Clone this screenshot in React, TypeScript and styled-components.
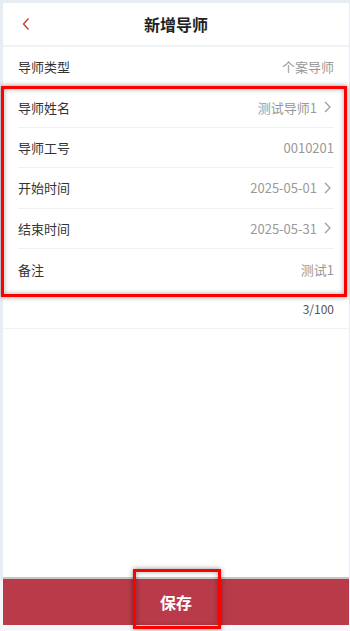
import React from "react";
import styled, { createGlobalStyle } from "styled-components";

const Global = createGlobalStyle`
  html, body { margin: 0; padding: 0; }
  body {
    background: #e8ecf3;
    font-family: "Noto Sans CJK SC", "Noto Sans", sans-serif;
  }
  * { box-sizing: border-box; }
`;

const Page = styled.div`
  position: relative;
  width: 350px;
  height: 631px;
  padding: 3px 1px 6px 3px;
  display: flex;
  flex-direction: column;
  background: linear-gradient(#e8ecf3, #e8ecf3 580px, #f5f7fb 580px);
`;

const Card = styled.div`
  flex: 1;
  background: #fff;
  display: flex;
  flex-direction: column;
`;

const Header = styled.div`
  position: relative;
  height: 44px;
  display: flex;
  align-items: center;
  justify-content: center;
  border-bottom: 2px solid #f1f2f5;
`;

const Title = styled.div`
  font-size: 16px;
  font-weight: 700;
  color: #222;
`;

const Back = styled.div`
  position: absolute;
  left: 18px;
  top: 14px;
  display: flex;
`;

const Row = styled.div<{ $last?: boolean }>`
  height: 40.4px;
  margin: 0 15px;
  display: flex;
  align-items: center;
  justify-content: space-between;
  border-bottom: ${(p) => (p.$last ? "none" : "1px solid #f0f1f3")};
`;

const Label = styled.div`
  font-size: 13px;
  color: #333;
`;

const Value = styled.div`
  display: flex;
  align-items: center;
  gap: 7px;
  font-size: 13px;
  color: #999;
`;

const ChevronWrap = styled.span`
  display: flex;
  margin-right: 3px;
`;

const Counter = styled.div`
  height: 40px;
  padding: 0 15px;
  display: flex;
  align-items: center;
  justify-content: flex-end;
  font-size: 12px;
  color: #555;
  border-bottom: 1px solid #f0f1f3;
`;

const Spacer = styled.div`
  flex: 1;
`;

const SaveBar = styled.div`
  height: 48px;
  background: #b93a48;
  border-top: 2px solid #c9c3c4;
  display: flex;
  align-items: center;
  justify-content: center;
  color: #fff;
  font-size: 16px;
  font-weight: 700;
`;

const Highlight = styled.div<{ $l: number; $t: number; $w: number; $h: number }>`
  position: absolute;
  left: ${(p) => p.$l}px;
  top: ${(p) => p.$t}px;
  width: ${(p) => p.$w}px;
  height: ${(p) => p.$h}px;
  border: 3px solid #ff0000;
  box-shadow: 0 0 5px rgba(0, 0, 0, 0.45), inset 0 0 5px rgba(0, 0, 0, 0.35);
  pointer-events: none;
`;

const Chevron = () => (
  <ChevronWrap>
    <svg width="7" height="12" viewBox="0 0 7 12">
      <path d="M1 1 L6 6 L1 11" fill="none" stroke="#999" strokeWidth="1.2" />
    </svg>
  </ChevronWrap>
);

const rows: { label: string; value: string; arrow?: boolean }[] = [
  { label: "导师类型", value: "个案导师" },
  { label: "导师姓名", value: "测试导师1", arrow: true },
  { label: "导师工号", value: "0010201" },
  { label: "开始时间", value: "2025-05-01", arrow: true },
  { label: "结束时间", value: "2025-05-31", arrow: true },
  { label: "备注", value: "测试1" },
];

export default function App() {
  return (
    <>
      <Global />
      <Page>
        <Card>
          <Header>
            <Back>
              <svg width="10" height="14" viewBox="0 0 10 14">
                <path d="M7.5 1.5 L2.5 7 L7.5 12.5" fill="none" stroke="#c0392b" strokeWidth="1.3" />
              </svg>
            </Back>
            <Title>新增导师</Title>
          </Header>
          {rows.map((r, i) => (
            <Row key={r.label} $last={i === rows.length - 1}>
              <Label>{r.label}</Label>
              <Value>
                {r.value}
                {r.arrow && <Chevron />}
              </Value>
            </Row>
          ))}
          <Counter>3/100</Counter>
          <Spacer />
          <SaveBar>保存</SaveBar>
        </Card>
        <Highlight $l={1} $t={86} $w={346} $h={211} />
        <Highlight $l={133} $t={569} $w={88} $h={60} />
      </Page>
    </>
  );
}
